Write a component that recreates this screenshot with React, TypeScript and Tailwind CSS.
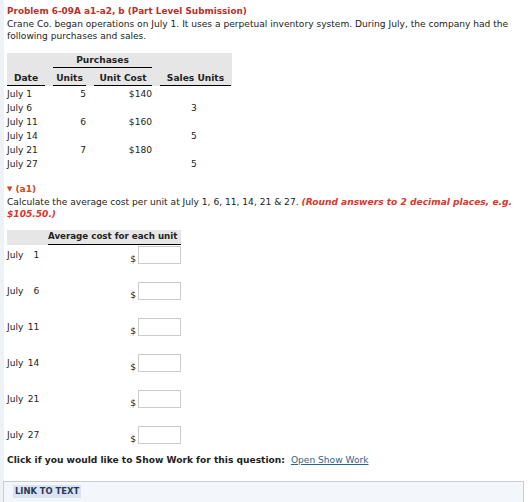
import React from 'react';

const rows = [
  { date: 'July 1', units: '5', cost: '$140', sales: '' },
  { date: 'July 6', units: '', cost: '', sales: '3' },
  { date: 'July 11', units: '6', cost: '$160', sales: '' },
  { date: 'July 14', units: '', cost: '', sales: '5' },
  { date: 'July 21', units: '7', cost: '$180', sales: '' },
  { date: 'July 27', units: '', cost: '', sales: '5' },
];

const days = ['1', '6', '11', '14', '21', '27'];

const App: React.FC = () => {
  return (
    <div className="min-h-[502px] w-[530px] bg-white border-l-4 border-[#eef1f5] font-['DejaVu_Sans',Verdana,sans-serif] text-[9.1px] text-[#222] leading-[12px]">
      <div className="pl-[3px] pt-[5px]">
        {/* Title */}
        <h1 className="font-bold text-[#b8312a] text-[8.9px] leading-[12px]">
          Problem 6-09A a1-a2, b (Part Level Submission)
        </h1>
        <p className="mt-[1px] w-[515px]">
          Crane Co. began operations on July 1. It uses a perpetual inventory system. During July, the company had the
          following purchases and sales.
        </p>

        {/* Purchases table */}
        <table className="mt-[11px] w-[225px] table-fixed border-collapse">
          <colgroup>
            <col className="w-[42px]" />
            <col className="w-[41px]" />
            <col className="w-[66px]" />
            <col className="w-[76px]" />
          </colgroup>
          <thead className="bg-[#e6e6e6]">
            <tr className="h-[14px]">
              <th></th>
              <th colSpan={2} className="px-[4px] pt-[1px]">
                <div className="border-b-[1.5px] border-black pb-[1px] font-bold">Purchases</div>
              </th>
              <th></th>
            </tr>
            <tr className="h-[18px]">
              <th className="pr-[4px] align-bottom">
                <div className="border-b-[1.5px] border-black pb-[1px] font-bold">Date</div>
              </th>
              <th className="px-[4px] align-bottom">
                <div className="border-b-[1.5px] border-black pb-[1px] font-bold">Units</div>
              </th>
              <th className="px-[4px] align-bottom">
                <div className="border-b-[1.5px] border-black pb-[1px] font-bold">Unit Cost</div>
              </th>
              <th className="pl-[4px] pr-[1px] align-bottom">
                <div className="border-b-[1.5px] border-black pb-[1px] font-bold">Sales Units</div>
              </th>
            </tr>
          </thead>
          <tbody>
            {rows.map((r) => (
              <tr key={r.date} className="h-[14px]">
                <td className="pt-[2px]">{r.date}</td>
                <td className="pt-[2px] pr-[4px] text-right">{r.units}</td>
                <td className="pt-[2px] pr-[4px] text-right">{r.cost}</td>
                <td className="pt-[2px] text-center">{r.sales}</td>
              </tr>
            ))}
          </tbody>
        </table>

        {/* a1 */}
        <div className="mt-[13px] flex items-center gap-[3px] font-bold text-[#d2461e]">
          <span className="text-[7px]">▼</span>
          <span>(a1)</span>
        </div>
        <div className="mt-[1px] w-[515px]">
          <p className="whitespace-nowrap">
            Calculate the average cost per unit at July 1, 6, 11, 14, 21 &amp; 27.{' '}
            <span className="font-bold italic text-[#e0352b]">(Round answers to 2 decimal places, e.g.</span>
          </p>
          <p className="font-bold italic text-[#e0352b]">$105.50.)</p>
        </div>

        {/* Average cost table */}
        <div className="mt-[10px] w-[174px]">
          <div className="flex h-[15px] bg-[#e6e6e6]">
            <div className="w-[41px]"></div>
            <div className="flex-1 whitespace-nowrap border-b-[1.5px] border-black text-[8.7px] font-bold leading-[13px]">
              Average cost for each unit
            </div>
          </div>
          {days.map((d) => (
            <div key={d} className="flex h-[36px] items-start">
              <div className="mt-[4px] flex w-[40px]">
                <span>July</span>
                <span className="w-[16px] text-right">{d}</span>
              </div>
              <div className="ml-auto mt-[1px] flex items-end gap-[2px]">
                <span className="leading-[10px]">$</span>
                <input
                  type="text"
                  className="h-[18px] w-[43px] border border-[#cccccc] bg-white outline-none"
                />
              </div>
            </div>
          ))}
        </div>

        {/* Show work */}
        <div className="-mt-[7px] flex gap-[6px]">
          <span className="font-bold">Click if you would like to Show Work for this question:</span>
          <a href="#" className="text-[#2d6390] underline">Open Show Work</a>
        </div>
      </div>

      {/* Link to text */}
      <div className="mt-[15px] ml-[-1px] mr-[6px] h-[30px] border border-[#c9cdd3] bg-[#f3f6fb] px-[9px] pt-[3px]">
        <span className="inline-block bg-[#dce3ee] px-[2px] text-[8.4px] font-bold leading-[13px] text-[#233a5e]">
          LINK TO TEXT
        </span>
      </div>
    </div>
  );
};

export default App;
